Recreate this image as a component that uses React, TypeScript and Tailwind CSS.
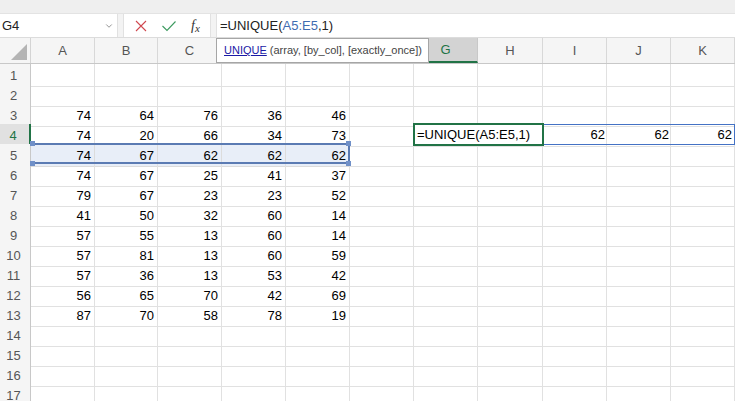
import type React from "react";
import { ChevronDown } from "lucide-react";

const columns = ["A", "B", "C", "D", "E", "F", "G", "H", "I", "J", "K"];
// letters hidden under the function tooltip
const covered = ["D", "E", "F"];

// rows 1..17, only 3..13 hold numbers in A:E
const data: Record<number, number[]> = {
    3: [74, 64, 76, 36, 46],
    4: [74, 20, 66, 34, 73],
    5: [74, 67, 62, 62, 62],
    6: [74, 67, 25, 41, 37],
    7: [79, 67, 23, 23, 52],
    8: [41, 50, 32, 60, 14],
    9: [57, 55, 13, 60, 14],
    10: [57, 81, 13, 60, 59],
    11: [57, 36, 13, 53, 42],
    12: [56, 65, 70, 42, 69],
    13: [87, 70, 58, 78, 19],
};

const rows = Array.from({ length: 17 }, (_, i) => i + 1);

const gridCols = "grid grid-cols-[31px_64px_63px_64px_64px_64px_64px_64px_65px_64px_64px_64px]";

const FormulaBar: React.FC = () => {
    return (
        <div className="flex flex-col bg-[#f3f3f3]">
            <div className="h-[14px] bg-[#efefef] border-b border-[#e3e3e3]" />
            <div className="flex flex-row h-[24px] gap-[5px] border-b border-[#dcdcdc]">
                <div className="w-[118px] bg-white border-r border-[#e1e1e1] flex flex-row items-center justify-between pl-[2px] pr-[3px]">
                    <span className="text-[13px] text-[#222]">G4</span>
                    <ChevronDown size={10} strokeWidth={1.5} className="text-[#555]" />
                </div>
                <div className="w-[88px] bg-white border-x border-[#e1e1e1] flex flex-row items-center">
                    <svg width="14" height="14" viewBox="0 0 14 14" className="ml-[10px]">
                        <path d="M2 2 L12 12 M12 2 L2 12" stroke="#d0484f" strokeWidth="1.1" fill="none" />
                    </svg>
                    <svg width="16" height="14" viewBox="0 0 16 14" className="ml-[13px]">
                        <path d="M1.5 7 L6 11.5 L14.5 2.5" stroke="#3c9a5f" strokeWidth="1.1" fill="none" />
                    </svg>
                    <span className="ml-[14px] text-[14px] text-[#333] italic" style={{ fontFamily: '"Liberation Serif", serif' }}>
                        f<span className="text-[11px] relative top-[2px]">x</span>
                    </span>
                </div>
                <div className="flex-1 bg-white border-l border-[#e1e1e1] flex items-center pl-[3px]">
                    <span className="text-[13px] text-[#222]">
                        =UNIQUE(<span className="text-[#3f6cb1]">A5:E5</span>,1)
                    </span>
                </div>
            </div>
        </div>
    );
};

const Sheet: React.FC = () => {
    return (
        <div className="relative">
            {/* column headers */}
            <div className={`${gridCols} h-[26px] bg-[#f5f5f5] border-b border-[#c8c8c8]`}>
                <div className="relative border-r border-[#d4d4d4]">
                    <svg width="16" height="16" viewBox="0 0 16 16" className="absolute right-[3px] bottom-[3px]">
                        <path d="M16 0 L16 16 L0 16 Z" fill="#b4b4b4" />
                    </svg>
                </div>
                {columns.map((c) => (
                    <div
                        key={c}
                        className={
                            c === "G"
                                ? "flex items-center justify-center text-[13px] text-[#217346] bg-[#d3d3d3] border-b-2 border-[#217346] border-r border-r-[#c8c8c8]"
                                : "flex items-center justify-center text-[13px] text-[#555] border-r border-[#d8d8d8]"
                        }
                    >
                        {covered.includes(c) ? "" : c}
                    </div>
                ))}
            </div>

            {/* body rows */}
            {rows.map((r) => (
                <div key={r} className={`${gridCols} h-5`}>
                    <div
                        className={
                            r === 4
                                ? "flex items-center justify-center pt-[2px] pr-[3px] text-[13px] text-[#217346] bg-[#e1e1e1] border-r-2 border-[#217346] border-b border-b-[#d4d4d4]"
                                : "flex items-center justify-center pt-[2px] pr-[3px] text-[13px] text-[#555] bg-[#f5f5f5] border-r border-[#c8c8c8] border-b border-b-[#dedede]"
                        }
                    >
                        {r}
                    </div>
                    {columns.map((c, ci) => (
                        <div
                            key={c}
                            className={
                                r === 5 && ci < 5
                                    ? "flex items-center justify-end pt-[2px] pr-[3px] text-[13px] text-black bg-[#e8eef8] border-r border-b border-[#dcdcdc]"
                                    : "flex items-center justify-end pt-[2px] pr-[3px] text-[13px] text-black border-r border-b border-[#e1e1e1]"
                            }
                        >
                            {ci < 5 && data[r] ? data[r][ci] : ""}
                        </div>
                    ))}
                </div>
            ))}

            {/* function tooltip */}
            <div className="absolute left-[216px] top-0 w-[213px] h-[25px] bg-white border border-[#a6a6a6] flex items-center pl-[7px] text-[11px] text-[#444] whitespace-nowrap">
                <span className="text-[#1a1aa6] underline">UNIQUE</span>
                <span>&nbsp;(array, [by_col], [exactly_once])</span>
            </div>

            {/* referenced range A5:E5 */}
            <div className="absolute left-[31px] top-[105px] w-[319px] h-[21px] border-y-2 border-r-2 border-[#5b7bb3]" />
            <div className="absolute left-[30px] top-[103px] w-[5px] h-[5px] bg-[#7090c8]" />
            <div className="absolute left-[30px] top-[123px] w-[5px] h-[5px] bg-[#7090c8]" />
            <div className="absolute left-[346px] top-[103px] w-[5px] h-[5px] bg-[#7090c8]" />
            <div className="absolute left-[346px] top-[123px] w-[5px] h-[5px] bg-[#7090c8]" />

            {/* spill range I4:K4 */}
            <div className="absolute left-[543px] top-[86px] w-[192px] h-[21px] border border-[#4472c4] flex flex-row pt-[1px]">
                <div className="w-[64px] flex items-center justify-end pr-[3px] text-[13px]">62</div>
                <div className="w-[64px] flex items-center justify-end pr-[3px] text-[13px]">62</div>
                <div className="w-[62px] flex items-center justify-end pr-[2px] text-[13px]">62</div>
            </div>

            {/* in-cell editor G4 */}
            <div className="absolute left-[413px] top-[85px] w-[131px] h-[23px] bg-white border-2 border-[#217346] flex items-center pl-[2px] pt-[1px] text-[13px] text-black whitespace-nowrap">
                =UNIQUE(A5:E5,1)
            </div>
        </div>
    );
};

const App: React.FC = () => {
    return (
        <div className="w-[735px] h-[401px] overflow-hidden bg-white" style={{ fontFamily: '"Liberation Sans", Arial, sans-serif' }}>
            <FormulaBar />
            <Sheet />
        </div>
    );
};

export default App;
